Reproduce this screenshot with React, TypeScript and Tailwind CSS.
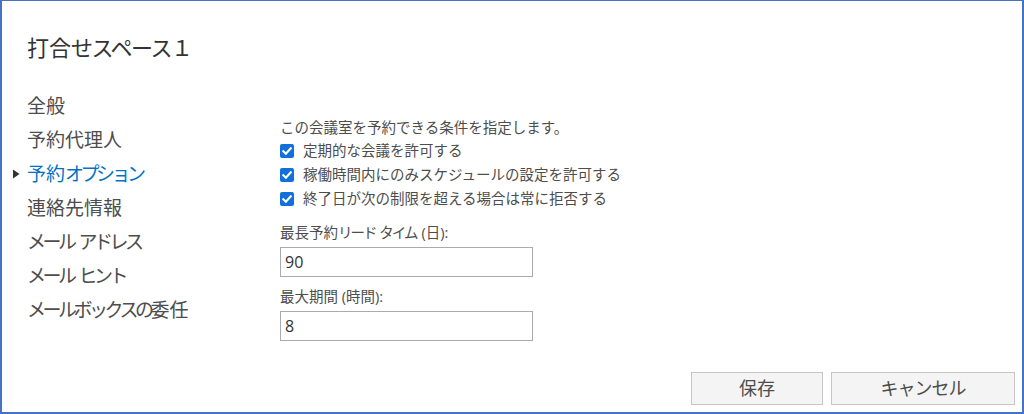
import React from "react";

const font = "font-['Open_Sans','Noto_Sans_CJK_JP',sans-serif]";

function Kana({ text, cls }: { text: string; cls: string }) {
  const parts = text.split(/([\u3040-\u30ff]+)/).filter((p) => p.length > 0);
  return (
    <>
      {parts.map((p, i) =>
        /^[\u3040-\u30ff]+$/.test(p) ? (
          <span key={i} className={cls}>
            {p}
          </span>
        ) : (
          <span key={i}>{p}</span>
        )
      )}
    </>
  );
}

function Check() {
  return (
    <span className="flex h-[14px] w-[14px] items-center justify-center rounded-[2px] bg-[#1270dd]">
      <svg width="12" height="12" viewBox="0 0 12 12">
        <path d="M2.3 6.2 L4.9 8.8 L9.8 3.3" fill="none" stroke="#fff" strokeWidth="2.1" strokeLinecap="square" />
      </svg>
    </span>
  );
}

const navItems = [
  "全般",
  "予約代理人",
  "予約オプション",
  "連絡先情報",
  "メール アドレス",
  "メール ヒント",
  "メールボックスの委任",
];

const checks = [
  "定期的な会議を許可する",
  "稼働時間内にのみスケジュールの設定を許可する",
  "終了日が次の制限を超える場合は常に拒否する",
];

export default function App() {
  return (
    <div
      className={`flex h-[414px] w-[1024px] flex-col border-t border-r-2 border-b-2 border-l-2 border-[#4472c4] bg-white ${font}`}
    >
      <h1 className="pl-[25px] pt-[32px] text-[22px] leading-[28px] text-[#333]">
        <Kana text="打合せスペース１" cls="tracking-[-1.5px]" />
      </h1>
      <div className="mt-[28px] flex">
        <nav className="flex w-[278px] flex-col pl-[11px]">
          {navItems.map((t, i) => (
            <div key={t} className="flex h-[34px] items-center">
              <span className="flex w-[14px] items-center">
                {i === 2 && (
                  <svg width="7" height="10" viewBox="0 0 7 10">
                    <path d="M0 0.5 L6.5 5 L0 9.5 Z" fill="#333" />
                  </svg>
                )}
              </span>
              <span
                className={`text-[19px] leading-[34px] ${i === 2 ? "text-[#0072c6]" : "text-[#4d4d4d]"}`}
              >
                <Kana text={t} cls="tracking-[-3.5px]" />
              </span>
            </div>
          ))}
        </nav>
        <div className="flex flex-col pt-[28px] text-[14.5px] text-[#4d4d4d]">
          <div className="h-[22px] leading-[22px]">この会議室を予約できる条件を指定します。</div>
          {checks.map((c) => (
            <div key={c} className="flex h-[24px] items-center gap-[9px]">
              <Check />
              <span className="leading-[24px]">{c}</span>
            </div>
          ))}
          <div className="mt-[12px] h-[20px] leading-[20px]">
            <Kana text="最長予約リード タイム" cls="tracking-[-2px]" />
            <span className="pl-[5px]">(日):</span>
          </div>
          <div className="mt-[4px] flex h-[30px] w-[253px] items-center border border-[#ababab] pl-[4px] text-[16px] text-[#333]">
            90
          </div>
          <div className="mt-[10px] h-[20px] leading-[20px]">最大期間 (時間):</div>
          <div className="mt-[4px] flex h-[30px] w-[253px] items-center border border-[#ababab] pl-[4px] text-[16px] text-[#333]">
            8
          </div>
        </div>
      </div>
      <div className="mt-auto flex justify-end gap-[8px] pb-[7px] pr-[7px]">
        <button className="h-[33px] w-[132px] border border-[#c6c6c6] bg-[#f4f4f4] text-[18px] text-[#4d4d4d]">
          保存
        </button>
        <button className="h-[33px] w-[184px] border border-[#c6c6c6] bg-[#f4f4f4] text-[18px] text-[#4d4d4d]">
          <Kana text="キャンセル" cls="tracking-[-1px]" />
        </button>
      </div>
    </div>
  );
}
